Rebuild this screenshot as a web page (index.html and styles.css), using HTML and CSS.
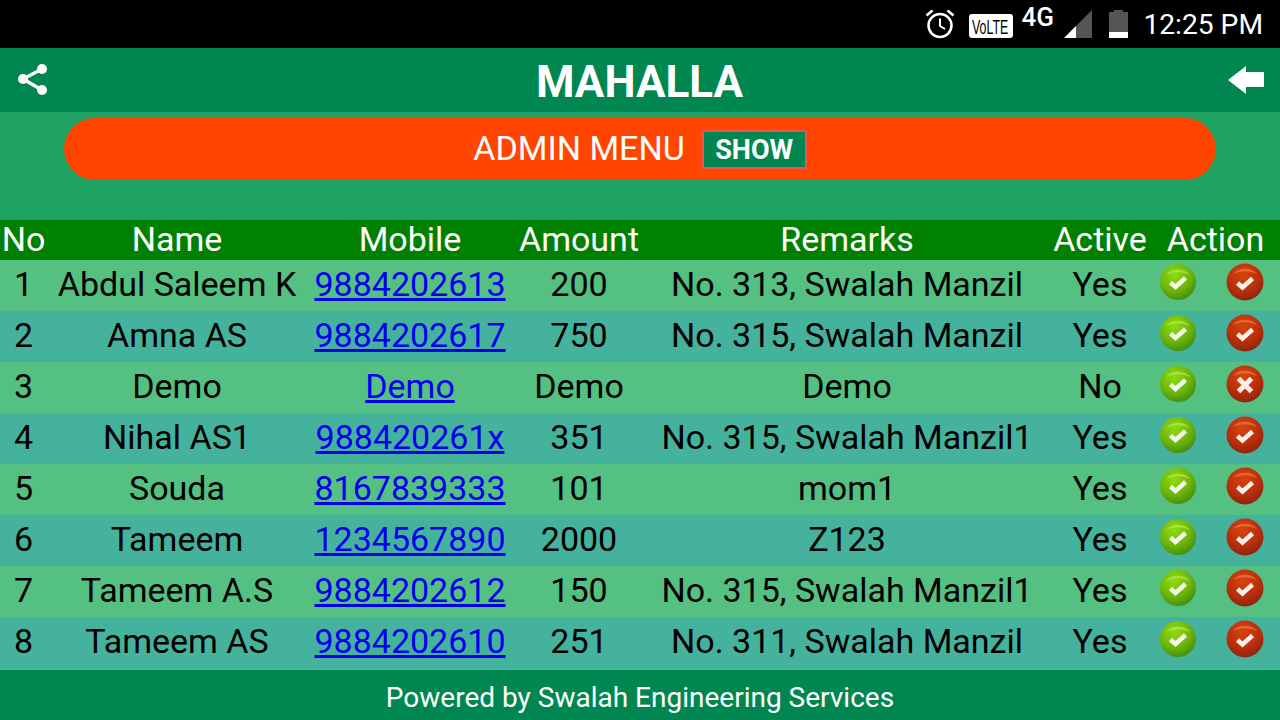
FILE: index.html
```html
<!DOCTYPE html>
<html lang="en">
<head>
  <meta charset="UTF-8">
  <meta name="viewport" content="width=device-width, initial-scale=1.0">
  <title>Mahalla</title>
  <link rel="stylesheet" href="styles.css">
</head>
<body>
  <svg class="defs" width="0" height="0">
    <defs>
      <radialGradient id="greenBall" cx="40%" cy="30%" r="75%">
        <stop offset="0" stop-color="#90dc10"/>
        <stop offset="0.6" stop-color="#6cb40a"/>
        <stop offset="1" stop-color="#3f8a10"/>
      </radialGradient>
      <radialGradient id="redBall" cx="45%" cy="30%" r="70%">
        <stop offset="0" stop-color="#d8440f"/>
        <stop offset="0.6" stop-color="#bb300a"/>
        <stop offset="1" stop-color="#8f2410"/>
      </radialGradient>
      <symbol id="okGreen" viewBox="0 0 38 38">
        <circle cx="19" cy="19" r="18" fill="url(#greenBall)"/>
        <path d="M7 12a14 11 0 0 1 24 0a20 14 0 0 0-24 0z" fill="#b4e85a" opacity=".7"/>
        <path d="M11.500 19.500l5 4.500l10-9" fill="none" stroke="#f2f8e8" stroke-width="4.500"/>
      </symbol>
      <symbol id="okRed" viewBox="0 0 38 38">
        <circle cx="19" cy="19" r="18.500" fill="url(#redBall)"/>
        <path d="M7 11a14 11 0 0 1 24 0a20 14 0 0 0-24 0z" fill="#ec7a4a" opacity=".7"/>
        <path d="M11.500 20l5 4.500l10-9" fill="none" stroke="#fbf0ea" stroke-width="4.500"/>
      </symbol>
      <symbol id="noRed" viewBox="0 0 38 38">
        <circle cx="19" cy="19" r="18.500" fill="url(#redBall)"/>
        <path d="M7 11a14 11 0 0 1 24 0a20 14 0 0 0-24 0z" fill="#ec7a4a" opacity=".7"/>
        <path d="M12.500 13.500l13 13m0-13l-13 13" fill="none" stroke="#fbeee8" stroke-width="5"/>
      </symbol>
    </defs>
  </svg>

  <div class="status-bar">
    <svg class="alarm" width="30" height="30" viewBox="0 0 30 30">
      <circle cx="15" cy="16.500" r="11.500" fill="none" stroke="#fff" stroke-width="2.500"/>
      <path d="M15 9.500v7.500l5 3" fill="none" stroke="#fff" stroke-width="2"/>
      <path d="M1.500 6.500l6-5M28.500 6.500l-6-5" fill="none" stroke="#fff" stroke-width="2.500"/>
    </svg>
    <svg class="volte" width="44" height="24" viewBox="0 0 44 24">
      <rect width="44" height="24" rx="3" fill="#fff"/>
      <text transform="translate(3 20) scale(.59 1)" class="volte-text">VoLTE</text>
    </svg>
    <span class="net">4G</span>
    <svg class="signal" width="28" height="28" viewBox="0 0 28 28">
      <path d="M28 0v28h-28z" fill="#555"/>
      <path d="M12 16v12h-12z" fill="#fff"/>
    </svg>
    <svg class="battery" width="19" height="28" viewBox="0 0 19 28">
      <path d="M5 0h9v2h5v26h-19v-26h5z" fill="#555"/>
      <rect y="22" width="19" height="6" fill="#fff"/>
    </svg>
    <span class="clock">12:25 PM</span>
  </div>

  <header class="app-bar">
    <svg class="share" width="32" height="34" viewBox="0 0 32 34">
      <path d="M6 16L25 6M6 16L25 27" stroke="#fff" stroke-width="3.500"/>
      <circle cx="6" cy="16" r="5" fill="#fff"/>
      <circle cx="25" cy="6" r="5" fill="#fff"/>
      <circle cx="25" cy="27" r="5" fill="#fff"/>
    </svg>
    <h1>MAHALLA</h1>
    <svg width="36" height="28" viewBox="0 0 36 28">
      <path d="M0 14L18 0v6h18v15H18v7z" fill="#fff"/>
    </svg>
  </header>

  <div class="menu-area">
    <div class="admin-menu">
      <span class="admin-label">ADMIN MENU</span>
      <button class="show-btn">SHOW</button>
    </div>
  </div>

  <table class="members">
    <colgroup>
      <col class="c-no">
      <col class="c-name">
      <col class="c-mobile">
      <col class="c-amount">
      <col class="c-remarks">
      <col class="c-active">
      <col class="c-act-a">
      <col class="c-act-b">
    </colgroup>
    <thead>
      <tr>
        <th>No</th>
        <th>Name</th>
        <th>Mobile</th>
        <th>Amount</th>
        <th>Remarks</th>
        <th>Active</th>
        <th colspan="2">Action</th>
      </tr>
    </thead>
    <tbody>
      <tr>
        <td>1</td><td>Abdul Saleem K</td><td><a href="#">9884202613</a></td><td>200</td><td>No. 313, Swalah Manzil</td><td>Yes</td>
        <td><svg class="ball"><use href="#okGreen"/></svg></td><td class="act-b"><svg class="ball"><use href="#okRed"/></svg></td>
      </tr>
      <tr>
        <td>2</td><td>Amna AS</td><td><a href="#">9884202617</a></td><td>750</td><td>No. 315, Swalah Manzil</td><td>Yes</td>
        <td><svg class="ball"><use href="#okGreen"/></svg></td><td class="act-b"><svg class="ball"><use href="#okRed"/></svg></td>
      </tr>
      <tr>
        <td>3</td><td>Demo</td><td><a href="#">Demo</a></td><td>Demo</td><td>Demo</td><td>No</td>
        <td><svg class="ball"><use href="#okGreen"/></svg></td><td class="act-b"><svg class="ball"><use href="#noRed"/></svg></td>
      </tr>
      <tr>
        <td>4</td><td>Nihal AS1</td><td><a href="#">988420261x</a></td><td>351</td><td>No. 315, Swalah Manzil1</td><td>Yes</td>
        <td><svg class="ball"><use href="#okGreen"/></svg></td><td class="act-b"><svg class="ball"><use href="#okRed"/></svg></td>
      </tr>
      <tr>
        <td>5</td><td>Souda</td><td><a href="#">8167839333</a></td><td>101</td><td>mom1</td><td>Yes</td>
        <td><svg class="ball"><use href="#okGreen"/></svg></td><td class="act-b"><svg class="ball"><use href="#okRed"/></svg></td>
      </tr>
      <tr>
        <td>6</td><td>Tameem</td><td><a href="#">1234567890</a></td><td>2000</td><td>Z123</td><td>Yes</td>
        <td><svg class="ball"><use href="#okGreen"/></svg></td><td class="act-b"><svg class="ball"><use href="#okRed"/></svg></td>
      </tr>
      <tr>
        <td>7</td><td>Tameem A.S</td><td><a href="#">9884202612</a></td><td>150</td><td>No. 315, Swalah Manzil1</td><td>Yes</td>
        <td><svg class="ball"><use href="#okGreen"/></svg></td><td class="act-b"><svg class="ball"><use href="#okRed"/></svg></td>
      </tr>
      <tr>
        <td>8</td><td>Tameem AS</td><td><a href="#">9884202610</a></td><td>251</td><td>No. 311, Swalah Manzil</td><td>Yes</td>
        <td><svg class="ball"><use href="#okGreen"/></svg></td><td class="act-b"><svg class="ball"><use href="#okRed"/></svg></td>
      </tr>
    </tbody>
  </table>

  <footer class="footer">Powered by Swalah Engineering Services</footer>
</body>
</html>
```

FILE: styles.css
```css
html, body {
  margin: 0;
  height: 720px;
  overflow: hidden;
}

body {
  font-family: Roboto, sans-serif;
  background-color: #1fa463;
  display: flex;
  flex-direction: column;
}

.defs {
  position: absolute;
}

.status-bar {
  flex: none;
  height: 48px;
  background-color: #000;
  color: #fff;
  display: flex;
  align-items: flex-start;
  padding-right: 17px;
}

.status-bar .alarm {
  margin: 9px 14px 0 auto;
}

.status-bar .volte {
  margin: 14px 8px 0 0;
}

.volte-text {
  font-family: "Liberation Sans", sans-serif;
  font-size: 21px;
  fill: #000;
}

.net {
  font-size: 26px;
  font-weight: 500;
  line-height: 24px;
  margin: 5px 10px 0 0;
  width: 33px;
}

.status-bar .signal {
  margin: 10px 17px 0 0;
}

.status-bar .battery {
  margin: 10px 15px 0 0;
}

.clock {
  font-size: 28.200px;
  line-height: 34px;
  margin-top: 8px;
}

.app-bar {
  flex: none;
  height: 64px;
  background-color: #008751;
  display: flex;
  align-items: center;
  justify-content: space-between;
  padding: 0 16px 0 17px;
}

.app-bar .share {
  margin-right: 2px;
}

.app-bar h1 {
  margin: 0;
  padding-top: 4px;
  color: #fff;
  font-size: 44px;
  font-weight: 700;
}

.menu-area {
  flex: none;
  height: 108px;
  padding: 6px 64px 0;
  box-sizing: border-box;
}

.admin-menu {
  height: 62px;
  background-color: #ff4500;
  border-radius: 31px;
  color: #fff;
  font-size: 34px;
  display: flex;
  align-items: center;
  justify-content: center;
  gap: 17px;
}

.admin-label {
  padding-bottom: 2px;
}

.show-btn {
  width: 105px;
  height: 39px;
  padding: 2px 0 0;
  background-color: #008751;
  border: 2px solid #ef5350;
  color: #fff;
  font-family: Roboto, sans-serif;
  font-size: 27px;
  font-weight: 700;
}

.members {
  flex: none;
  width: 1280px;
  border-collapse: collapse;
  table-layout: fixed;
  font-size: 34px;
  line-height: 38px;
  text-align: center;
}

.members th {
  height: 40px;
  padding: 0 0 2px;
  box-sizing: border-box;
  background-color: #008000;
  color: #fff;
  font-weight: 400;
}

.members td {
  height: 51px;
  padding: 0 0 4px;
  box-sizing: border-box;
  color: #000;
}

.members tbody tr:nth-child(odd) {
  background-color: #54c082;
}

.members tbody tr:nth-child(even) {
  background-color: #45b29d;
}

.members tbody tr:last-child td {
  height: 52px;
}

.members a {
  color: #0000ee;
}

.c-no { width: 47px; }
.c-name { width: 260px; }
.c-mobile { width: 206px; }
.c-amount { width: 132px; }
.c-remarks { width: 404px; }
.c-active { width: 102px; }
.c-act-a { width: 54px; }
.c-act-b { width: 75px; }

.members .act-b {
  padding-left: 4px;
}

.ball {
  display: block;
  width: 38px;
  height: 38px;
  margin: -4px auto 0;
}

.footer {
  flex: none;
  height: 51px;
  box-sizing: border-box;
  border-top: 1px solid #54c082;
  background-color: #008751;
  color: #fff;
  font-size: 28px;
  line-height: 56px;
  text-align: center;
}
```
